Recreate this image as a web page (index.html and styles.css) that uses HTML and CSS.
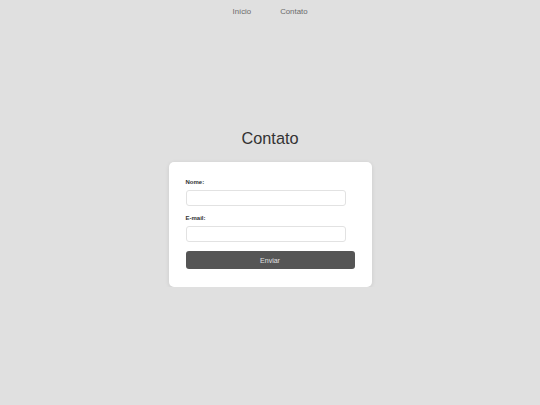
FILE: index.html
```html
<!DOCTYPE html>
<html lang="pt">
<head>
<meta charset="utf-8">
<title>Contato</title>
<link rel="stylesheet" href="styles.css">
</head>
<body>
<nav class="nav">
  <a class="nav-link" href="#">Início</a>
  <a class="nav-link" href="#">Contato</a>
</nav>
<main class="main">
  <h1 class="title">Contato</h1>
  <form class="card">
    <label class="label" for="nome">Nome:</label>
    <input class="input" id="nome" type="text">
    <label class="label" for="email">E-mail:</label>
    <input class="input" id="email" type="email">
    <button class="button" type="button">Enviar</button>
  </form>
</main>
</body>
</html>
```
FILE: styles.css
```css
html, body {
  margin: 0;
  padding: 0;
}
body {
  background: #e0e0e0;
  font-family: "Liberation Sans", Arial, sans-serif;
  color: #333;
}
.nav {
  display: flex;
  justify-content: center;
  gap: 29px;
  padding-top: 7px;
  font-size: 7.8px;
  line-height: 9px;
}
.nav-link {
  color: #6a6a6a;
  text-decoration: none;
}
.main {
  display: flex;
  flex-direction: column;
  align-items: center;
  padding-top: 113px;
}
.title {
  margin: 0 0 14px;
  font-size: 16.3px;
  line-height: 19px;
  font-weight: normal;
  color: #333;
}
.card {
  box-sizing: border-box;
  width: 203px;
  padding: 16px 17px 18px;
  background: #fff;
  border-radius: 5px;
  box-shadow: 0 1px 4px rgba(0, 0, 0, 0.1);
  display: flex;
  flex-direction: column;
  align-items: flex-start;
}
.label {
  display: block;
  font-size: 6px;
  line-height: 8px;
  font-weight: bold;
  color: #333;
  margin-bottom: 4px;
}
.input {
  box-sizing: border-box;
  width: 95%;
  height: 16px;
  margin: 0 0 8px;
  padding: 0 4px;
  border: 1px solid #e2e2e2;
  border-radius: 3px;
  background: #fff;
  font-size: 7px;
}
.button {
  box-sizing: border-box;
  width: 100%;
  height: 18px;
  margin: 1px 0 0;
  border: none;
  border-radius: 3px;
  background: #555;
  color: #e0e0e0;
  font-family: "Liberation Sans", Arial, sans-serif;
  font-size: 7px;
  padding: 0;
}
```
